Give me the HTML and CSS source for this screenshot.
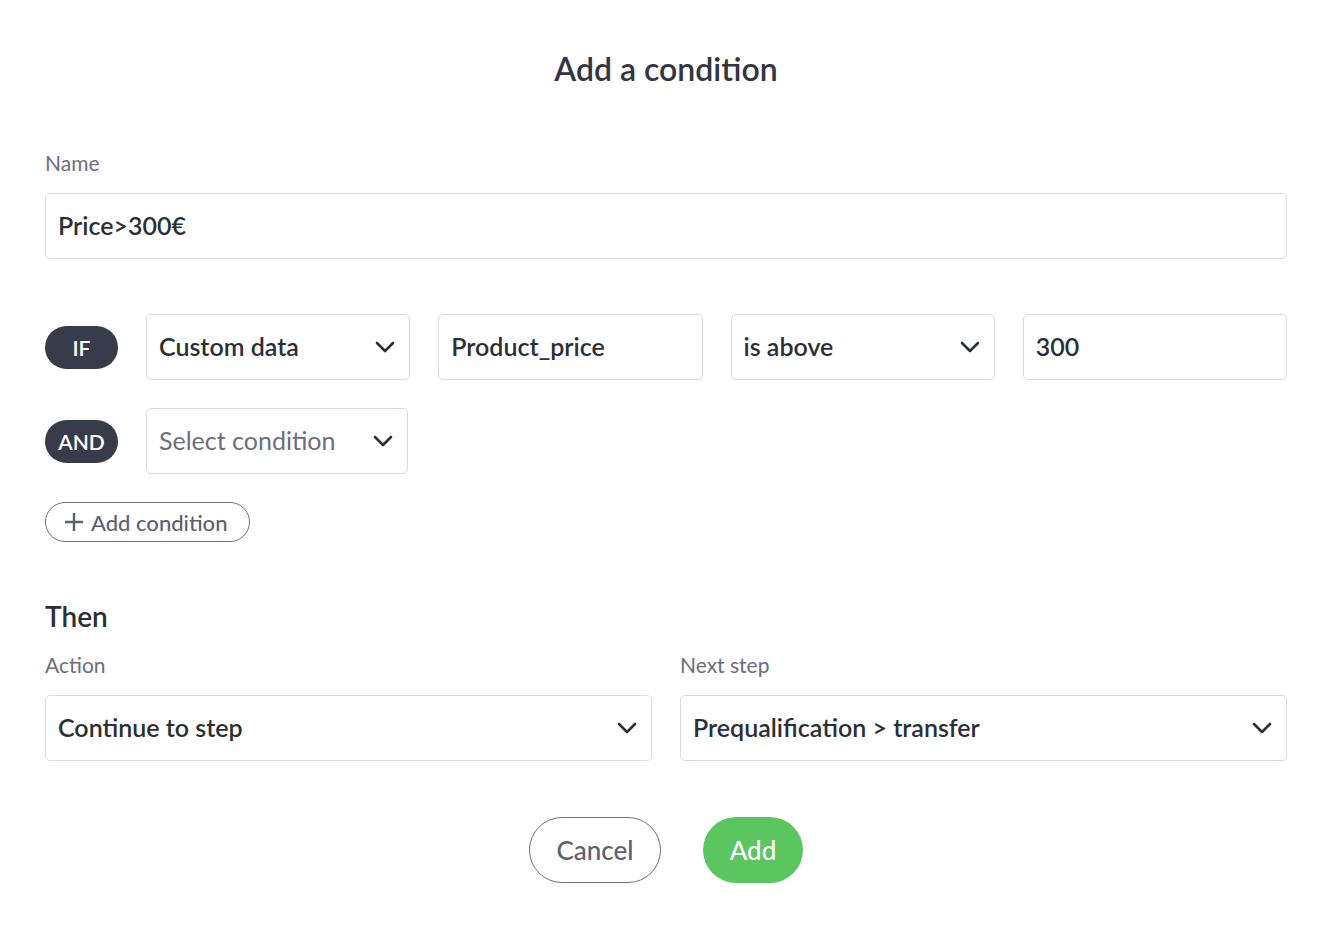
FILE: index.html
```html
<!DOCTYPE html>
<html lang="en">
<head>
<meta charset="utf-8">
<title>Add a condition</title>
<link rel="stylesheet" href="styles.css">
</head>
<body>
<div class="dialog">
  <h1 class="title">Add a condition</h1>

  <label class="label name-label">Name</label>
  <div class="field">Price&gt;300€</div>

  <div class="cond-row row-if">
    <span class="pill">IF</span>
    <div class="field select">Custom data
      <svg class="chev" viewBox="0 0 20 12"><path d="M2 2 L10 10 L18 2"/></svg>
    </div>
    <div class="field">Product_price</div>
    <div class="field select">is above
      <svg class="chev" viewBox="0 0 20 12"><path d="M2 2 L10 10 L18 2"/></svg>
    </div>
    <div class="field">300</div>
  </div>

  <div class="cond-row row-and">
    <span class="pill">AND</span>
    <div class="field select placeholder">Select condition
      <svg class="chev" viewBox="0 0 20 12"><path d="M2 2 L10 10 L18 2"/></svg>
    </div>
  </div>

  <button class="add-cond">
    <svg class="plus" viewBox="0 0 20 20"><path d="M10 1 V19 M1 10 H19"/></svg>
    Add condition
  </button>

  <h2 class="then">Then</h2>
  <div class="then-grid">
    <div class="col">
      <label class="label">Action</label>
      <div class="field select">Continue to step
        <svg class="chev" viewBox="0 0 20 12"><path d="M2 2 L10 10 L18 2"/></svg>
      </div>
    </div>
    <div class="col">
      <label class="label">Next step</label>
      <div class="field select">Prequalification &gt; transfer
        <svg class="chev" viewBox="0 0 20 12"><path d="M2 2 L10 10 L18 2"/></svg>
      </div>
    </div>
  </div>

  <div class="actions">
    <button class="btn btn-cancel">Cancel</button>
    <button class="btn btn-add">Add</button>
  </div>
</div>
</body>
</html>
```

FILE: styles.css
```css
* { box-sizing: border-box; }

html, body {
  margin: 0;
  padding: 0;
  background: #ffffff;
}

body {
  font-family: "Lato", "Noto Sans", sans-serif;
  color: #2c2f36;
}

.dialog {
  padding: 49px 45px 0 45px;
  display: flex;
  flex-direction: column;
}

.title {
  margin: 0;
  text-align: center;
  font-size: 32px;
  line-height: 40px;
  font-weight: 600;
  color: #33363e;
}

.label {
  display: block;
  font-size: 21px;
  line-height: 24px;
  color: #6b6e7c;
  margin-bottom: 18px;
}

.name-label {
  margin-top: 62px;
}

.field {
  height: 66px;
  border: 1.5px solid #d9dae7;
  border-radius: 5px;
  padding: 0 13px 2px 12px;
  display: flex;
  align-items: center;
  justify-content: space-between;
  font-size: 25px;
  font-weight: 600;
  color: #2c2f36;
  background: #fff;
}

.field.placeholder {
  color: #6b6e7c;
  font-weight: 400;
}

.chev {
  width: 20px;
  height: 12px;
  flex: none;
  margin-right: 1px;
  margin-top: 2px;
}

.chev path {
  fill: none;
  stroke: #2c2f36;
  stroke-width: 2.6;
  stroke-linecap: round;
  stroke-linejoin: round;
}

.cond-row {
  display: grid;
  grid-template-columns: 73px repeat(4, 1fr);
  column-gap: 28px;
  align-items: center;
}

.row-if {
  margin-top: 55px;
}

.row-and {
  margin-top: 28px;
  grid-template-columns: 73px 262px;
}

.pill {
  height: 43px;
  border-radius: 22px;
  background: #383c4a;
  color: #fff;
  font-size: 21px;
  font-weight: 600;
  display: flex;
  align-items: center;
  justify-content: center;
}

.add-cond {
  align-self: flex-start;
  margin-top: 28px;
  height: 40px;
  width: 205px;
  border: 1.5px solid #6c6f80;
  border-radius: 20px;
  background: #fff;
  color: #5d6070;
  font-family: inherit;
  font-size: 22px;
  font-weight: 500;
  display: flex;
  align-items: center;
  gap: 7px;
  padding: 0 0 0 18px;
  cursor: pointer;
}

.plus {
  width: 20px;
  height: 20px;
  flex: none;
}

.plus path {
  fill: none;
  stroke: #5d6070;
  stroke-width: 2.4;
}

.then {
  margin: 58px 0 21px 0;
  font-size: 28px;
  line-height: 32px;
  font-weight: 600;
  color: #2c2f36;
}

.then-grid {
  display: grid;
  grid-template-columns: 1fr 1fr;
  column-gap: 28px;
}

.actions {
  margin-top: 56px;
  display: flex;
  justify-content: center;
  gap: 42px;
}

.btn {
  height: 66px;
  border-radius: 33px;
  font-family: inherit;
  font-size: 26px;
  font-weight: 500;
  cursor: pointer;
}

.btn-cancel {
  width: 132px;
  border: 1.5px solid #6c6f80;
  background: #fff;
  color: #5d6070;
}

.btn-add {
  width: 100px;
  border: none;
  background: #5bc560;
  color: #fff;
}
```
